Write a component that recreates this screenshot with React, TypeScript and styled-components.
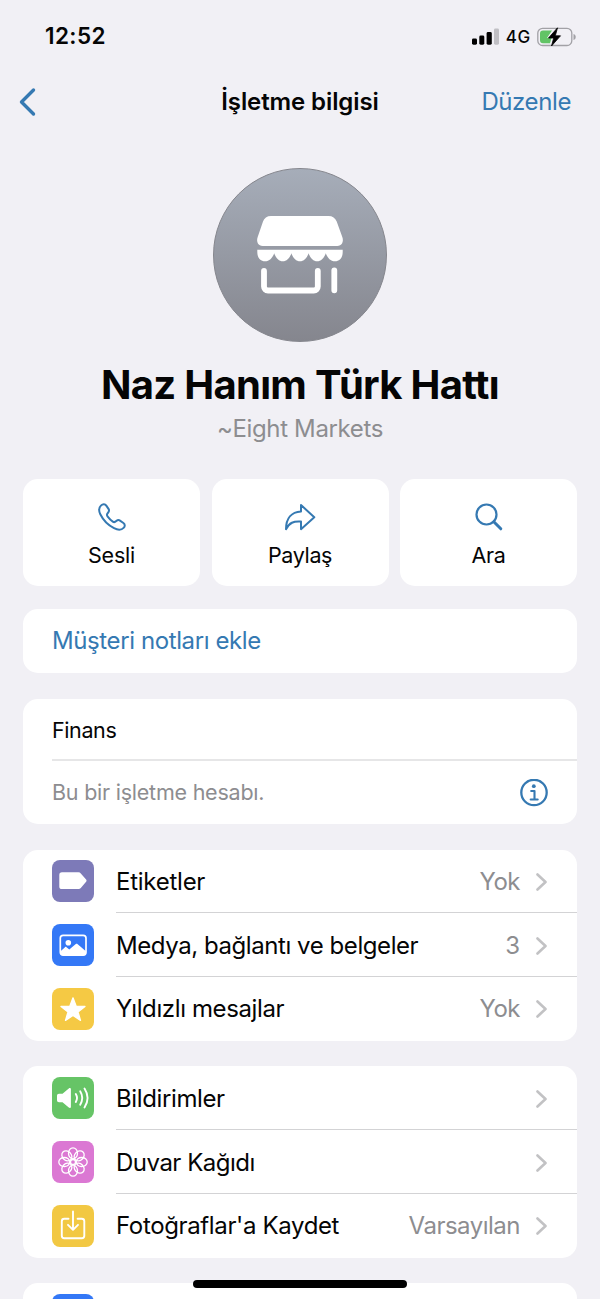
import React from 'react';
import styled, { createGlobalStyle } from 'styled-components';

const blue = '#3579b2';
const grey = '#8d8d90';

const GlobalStyle = createGlobalStyle`
  * { box-sizing: border-box; }
  html, body { margin: 0; padding: 0; }
  body {
    height: 1299px;
    overflow: hidden;
    background: #f1f0f5;
    font-family: Inter, "Liberation Sans", sans-serif;
    color: #050505;
  }
  svg { display: block; flex: none; }
`;

const Screen = styled.main`
  width: 600px;
  height: 1299px;
  overflow: hidden;
  display: flex;
  flex-direction: column;
  position: relative;
`;

const Text = styled.span<{ $size?: number; $weight?: number; $track?: number; $color?: string }>`
  font-size: ${p => p.$size ?? 24}px;
  font-weight: ${p => p.$weight ?? 400};
  letter-spacing: ${p => p.$track ?? 0}px;
  color: ${p => p.$color ?? 'inherit'};
  line-height: 1.25;
  white-space: nowrap;
`;

const StatusBar = styled.div`
  height: 72px;
  flex: none;
  padding: 1px 24px 0 45px;
  display: flex;
  align-items: center;
  justify-content: space-between;
`;

const StatusIcons = styled.div`
  display: flex;
  align-items: center;
  gap: 6.5px;
`;

const NetworkLabel = styled.div`
  display: flex;
  padding-top: 2px;
`;

const NavBar = styled.header`
  height: 60px;
  flex: none;
  padding: 0 29px 0 18px;
  display: flex;
  align-items: center;
`;

const NavSide = styled.div<{ $width: number; $end?: boolean }>`
  width: ${p => p.$width}px;
  display: flex;
  justify-content: ${p => (p.$end ? 'flex-end' : 'flex-start')};
`;

const NavTitle = styled.div`
  flex: 1;
  display: flex;
  justify-content: center;
`;

const Profile = styled.section`
  height: 346.5px;
  flex: none;
  padding-top: 36px;
  display: flex;
  flex-direction: column;
  align-items: center;
`;

const Avatar = styled.div`
  width: 174px;
  height: 174px;
  flex: none;
  border-radius: 50%;
  border: 1px solid #85868d;
  background: linear-gradient(#a6adb9, #85868e);
  display: flex;
  align-items: center;
  justify-content: center;
`;

const ProfileName = styled.h1`
  margin: 18px 0 0;
  height: 50px;
  display: flex;
  align-items: center;
`;

const ProfileAlias = styled.div`
  height: 38px;
  display: flex;
  align-items: center;
`;

const Actions = styled.div`
  flex: none;
  height: 107.5px;
  margin: 0 23px 23px;
  display: grid;
  grid-template-columns: repeat(3, 1fr);
  gap: 11.5px;
`;

const ActionCard = styled.div`
  background: #fff;
  border-radius: 15px;
  padding-top: 24px;
  display: flex;
  flex-direction: column;
  align-items: center;
  gap: 11.5px;
`;

const Card = styled.section<{ $gap?: number }>`
  flex: none;
  margin: 0 23px ${p => p.$gap ?? 25.5}px;
  background: #fff;
  border-radius: 15px;
  overflow: hidden;
`;

const PlainRow = styled.div<{ $height: number; $line?: boolean; $top?: number }>`
  height: ${p => p.$height}px;
  margin-left: 29px;
  padding-top: ${p => p.$top ?? 0}px;
  padding-right: 29px;
  display: flex;
  align-items: center;
  justify-content: space-between;
  border-bottom: ${p => (p.$line ? '2px solid #e6e6e7' : 'none')};
`;

const Row = styled.div`
  height: 63.8px;
  padding-left: 29px;
  display: flex;
  align-items: center;
  gap: 22px;
  &:last-child > div:last-child { border-bottom-color: transparent; }
`;

const RowBody = styled.div`
  flex: 1;
  align-self: stretch;
  padding: 2px 30px 0 0;
  display: flex;
  align-items: center;
  justify-content: space-between;
  border-bottom: 1px solid #d3d3d5;
`;

const RowEnd = styled.div`
  display: flex;
  align-items: center;
  gap: 15px;
`;

const Tile = styled.div<{ $color: string }>`
  width: 42px;
  height: 42px;
  flex: none;
  border-radius: 8px;
  background: ${p => p.$color};
`;

const HomeIndicator = styled.div`
  position: absolute;
  left: 193px;
  top: 1280px;
  width: 214px;
  height: 7.5px;
  border-radius: 4px;
  background: #000;
`;

const Signal = () => (
  <svg width="27" height="17" viewBox="0 0 27 17">
    <rect x="0" y="10.5" width="5" height="6.2" rx="1.4" fill="#000" />
    <rect x="7.3" y="7.6" width="5" height="9.1" rx="1.4" fill="#000" />
    <rect x="14.6" y="4" width="5.2" height="12.7" rx="1.4" fill="#000" />
    <rect x="22" y="0.5" width="5" height="16.2" rx="1.4" fill="#c0bfc4" />
  </svg>
);

const Battery = () => (
  <svg width="39" height="20" viewBox="0 0 39 20">
    <rect x="0.8" y="1.3" width="34" height="17.2" rx="4.8" fill="none" stroke="#a2a1a6" strokeWidth="1.3" />
    <path d="M36.5 7v6c1.7-.6 2.2-1.7 2.2-3s-.5-2.4-2.2-3z" fill="#a2a1a6" />
    <path d="M6 3.5H15L10 11h4.5L13 16.3H6a3 3 0 0 1-3-3V6.500a3 3 0 0 1 3-3z" fill="#62c466" />
    <path d="M20.500.8 11.500 11h5.200L14.500 19 23.500 8.800h-5.200z" fill="#000" stroke="#000" strokeWidth=".8" strokeLinejoin="round" />
  </svg>
);

const BackIcon = () => (
  <svg width="18" height="30" viewBox="0 0 18 30">
    <path d="M15.500 3 3.500 15l12 12" fill="none" stroke={blue} strokeWidth="3.400" strokeLinecap="round" strokeLinejoin="round" />
  </svg>
);

const StoreIcon = () => (
  <svg width="174" height="174" viewBox="0 0 174 174">
    <path d="M58 48h57.500c4 0 6.800 2 8.200 5.500l5.600 15.500c1.800 5-.8 9-5 9H49.700c-4.200 0-6.800-4-5-9l5.300-15.500C51.200 50 54 48 58 48z" fill="#fff" />
    <path d="M44.300 81.700h85.400v2.300c0 6-3.500 9.300-7.600 9.300-4.800 0-7.700-3.600-9.300-8-1.700 4.700-4.800 8-8.600 8s-7-3.300-8.600-8c-1.600 4.700-4.800 8-8.600 8s-7-3.300-8.600-8c-1.600 4.700-4.800 8-8.600 8s-6.900-3.300-8.600-8c-1.600 4.400-4.500 8-9.300 8-4.100 0-7.600-3.300-7.600-9.300z" fill="#fff" />
    <path d="M51 103v15.500a4 4 0 0 0 4 4h45.800a4 4 0 0 0 4-4V103M121.300 102.300v20" fill="none" stroke="#fff" strokeWidth="5.800" strokeLinecap="round" />
  </svg>
);

const PhoneIcon = () => (
  <svg width="28" height="28" viewBox="0 0 28 28">
    <path d="M3.100 2.400C4.800.7 7.100.8 8.300 2.600L10.500 5.900C11.400 7.300 11.100 8.500 10 9.700 8.700 11.100 8.500 12 9.500 13.300 11 15.300 12.800 17.200 14.800 18.600 16 19.500 17 19.300 18.300 18.100 19.500 17 20.700 16.700 22 17.600L25.400 20C27.100 21.200 27.200 23.200 25.600 24.900 23.300 27.300 19.900 27.200 16 25.200 10.200 22.200 5.100 17 2.300 11.300.6 7.700.9 4.500 3.100 2.400z" fill="none" stroke={blue} strokeWidth="2" strokeLinejoin="round" />
  </svg>
);

const ShareIcon = () => (
  <svg width="32" height="28" viewBox="0 0 32 28">
    <path d="M17 2 30.300 14.300 17 26.200V18.600C9.500 18 5.300 19.700 2 26.200 2 15.500 7.500 8.900 17 8.400z" fill="none" stroke={blue} strokeWidth="2" strokeLinejoin="round" />
  </svg>
);

const SearchIcon = () => (
  <svg width="28" height="28" viewBox="0 0 28 28">
    <circle cx="11.500" cy="11.500" r="10" fill="none" stroke={blue} strokeWidth="2.200" />
    <path d="m18.800 18.800 7 7" stroke={blue} strokeWidth="3" strokeLinecap="round" />
  </svg>
);

const InfoIcon = () => (
  <svg width="28" height="28" viewBox="0 0 28 28">
    <circle cx="14" cy="13.500" r="12.700" fill="none" stroke={blue} strokeWidth="2.300" />
    <circle cx="13.800" cy="7.200" r="1.900" fill={blue} />
    <path d="M11.200 12h3.300v8.300M10.700 20.500h7" fill="none" stroke={blue} strokeWidth="2.100" strokeLinecap="round" strokeLinejoin="round" />
  </svg>
);

const Chevron = () => (
  <svg width="12" height="20" viewBox="0 0 12 20">
    <path d="m2.500 2.500 8 7.500-8 7.500" fill="none" stroke="#c2c2c4" strokeWidth="2.600" strokeLinecap="round" strokeLinejoin="round" />
  </svg>
);

const Glyph = ({ children }: { children: React.ReactNode }) => (
  <svg width="42" height="42" viewBox="0 0 42 42" fill="none" stroke="#fff" strokeLinecap="round" strokeLinejoin="round">
    {children}
  </svg>
);

const LabelGlyph = () => (
  <Glyph>
    <path d="M10 12.300h16.500c1 0 1.700.4 2.300 1.100l5.300 6.200c.6.700.6 1.500 0 2.200l-5.300 6.200c-.6.700-1.300 1.100-2.300 1.100H10c-1.800 0-2.700-1-2.700-2.700V15c0-1.700.9-2.700 2.700-2.700z" fill="#fff" stroke="none" />
  </Glyph>
);

const MediaGlyph = () => (
  <Glyph>
    <rect x="8.300" y="11.300" width="25.700" height="19.800" rx="2.800" strokeWidth="1.700" />
    <circle cx="16.300" cy="18.700" r="2.800" fill="#fff" stroke="none" />
    <path d="M8.300 27.500 13 23.200c.5-.5 1-.5 1.500 0l2.800 2.300 6.200-5.300c.7-.6 1.500-.6 2.200 0l8.200 7v2a2 2 0 0 1-2 2H10.300a2 2 0 0 1-2-2z" fill="#fff" stroke="none" />
  </Glyph>
);

const StarGlyph = () => (
  <Glyph>
    <path d="m21 9.800 3.100 8.300 8.900.3-7 5.500 2.500 8.500-7.500-5-7.500 5 2.500-8.500-7-5.500 8.900-.3z" fill="#fff" strokeWidth="1.300" />
  </Glyph>
);

const SoundGlyph = () => (
  <Glyph>
    <path d="M7 16.700h3.500l6.300-5.300c1-.8 2.100-.3 2.100.9v17.400c0 1.200-1.100 1.700-2.100.9l-6.300-5.300H7c-1.200 0-2-.8-2-2v-4.600c0-1.200.8-2 2-2z" fill="#fff" stroke="none" />
    <path d="M23.800 17c1.500 2.500 1.500 5.500 0 8M28.200 14.300c2.600 4.300 2.600 9.100 0 13.400M32.500 11.500c3.900 6 3.900 13 0 19" strokeWidth="1.900" />
  </Glyph>
);

const FlowerGlyph = () => (
  <Glyph>
    {[0, 45, 90, 135, 180, 225, 270, 315].map(a => (
      <ellipse key={a} transform={`rotate(${a} 21 21)`} cx="21" cy="12.300" rx="4.500" ry="5.500" strokeWidth="1.300" />
    ))}
    <circle cx="21" cy="21" r="2.500" strokeWidth="1.300" />
  </Glyph>
);

const SaveGlyph = () => (
  <Glyph>
    <path d="M16.500 13.700h-4.200a2.500 2.500 0 0 0-2.500 2.500v14.500a2.500 2.500 0 0 0 2.500 2.500h17.500a2.500 2.500 0 0 0 2.500-2.500V16.200a2.500 2.500 0 0 0-2.500-2.500h-4.200" strokeWidth="1.900" />
    <path d="M21 6.500v18M16 19.800l5 5 5-5" strokeWidth="1.900" />
  </Glyph>
);

type Item = { icon: React.ReactNode; color: string; label: string; track: number; value?: string; valueTrack?: number };

const media: Item[] = [
  { icon: <LabelGlyph />, color: '#7d7ab8', label: 'Etiketler', track: -0.25, value: 'Yok', valueTrack: -0.5 },
  { icon: <MediaGlyph />, color: '#3478f6', label: 'Medya, bağlantı ve belgeler', track: -0.43, value: '3' },
  { icon: <StarGlyph />, color: '#f5c944', label: 'Yıldızlı mesajlar', track: -0.38, value: 'Yok', valueTrack: -0.5 },
];

const settings: Item[] = [
  { icon: <SoundGlyph />, color: '#66c466', label: 'Bildirimler', track: -0.38 },
  { icon: <FlowerGlyph />, color: '#db78d3', label: 'Duvar Kağıdı', track: -0.5 },
  { icon: <SaveGlyph />, color: '#f2c843', label: "Fotoğraflar'a Kaydet", track: -0.36, value: 'Varsayılan', valueTrack: -0.5 },
];

const List = ({ items }: { items: Item[] }) => (
  <Card>
    {items.map(i => (
      <Row key={i.label}>
        <Tile $color={i.color}>{i.icon}</Tile>
        <RowBody>
          <Text $track={i.track}>{i.label}</Text>
          <RowEnd>
            {i.value && <Text $color={grey} $track={i.valueTrack}>{i.value}</Text>}
            <Chevron />
          </RowEnd>
        </RowBody>
      </Row>
    ))}
  </Card>
);

export default function App() {
  return (
    <>
      <GlobalStyle />
      <Screen>
        <StatusBar>
          <Text $size={22.500} $weight={600} $track={0.4}>12:52</Text>
          <StatusIcons>
            <Signal />
            <NetworkLabel><Text $size={17} $weight={500} $track={0.4}>4G</Text></NetworkLabel>
            <Battery />
          </StatusIcons>
        </StatusBar>
        <NavBar>
          <NavSide $width={111}><BackIcon /></NavSide>
          <NavTitle><Text $weight={600} $track={-0.1}>İşletme bilgisi</Text></NavTitle>
          <NavSide $width={100} $end><Text $color={blue} $track={-0.4}>Düzenle</Text></NavSide>
        </NavBar>
        <Profile>
          <Avatar><StoreIcon /></Avatar>
          <ProfileName><Text $size={40} $weight={700} $track={-0.7}>Naz Hanım Türk Hattı</Text></ProfileName>
          <ProfileAlias><Text $color={grey} $track={-0.35}>~Eight Markets</Text></ProfileAlias>
        </Profile>
        <Actions>
          <ActionCard><PhoneIcon /><Text $size={21.500} $track={-0.2}>Sesli</Text></ActionCard>
          <ActionCard><ShareIcon /><Text $size={21.500} $track={-0.35}>Paylaş</Text></ActionCard>
          <ActionCard><SearchIcon /><Text $size={21.500} $track={-0.3}>Ara</Text></ActionCard>
        </Actions>
        <Card>
          <PlainRow $height={64}><Text $color={blue} $track={-0.4}>Müşteri notları ekle</Text></PlainRow>
        </Card>
        <Card>
          <PlainRow $height={62.500} $line $top={3}><Text $size={21.500} $track={-0.4}>Finans</Text></PlainRow>
          <PlainRow $height={63}><Text $size={21.500} $color={grey} $track={-0.23}>Bu bir işletme hesabı.</Text><InfoIcon /></PlainRow>
        </Card>
        <List items={media} />
        <List items={settings} />
        <Card $gap={0}>
          <Row><Tile $color="#3478f6" /><RowBody /></Row>
        </Card>
        <HomeIndicator />
      </Screen>
    </>
  );
}
